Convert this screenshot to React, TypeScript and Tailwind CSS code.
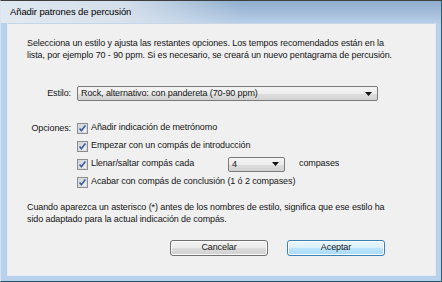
import React from 'react';

const font = "font-['Liberation_Sans',Arial,sans-serif]";

function CheckBox() {
  return (
    <svg width="11" height="11" viewBox="0 0 11 11" className="shrink-0">
      <defs>
        <linearGradient id="cbg" x1="0" y1="0" x2="1" y2="1">
          <stop offset="0" stopColor="#cbcfd5" />
          <stop offset="1" stopColor="#f6f7f8" />
        </linearGradient>
      </defs>
      <rect x="0.5" y="0.5" width="10" height="10" fill="#f4f4f4" stroke="#8e8f8f" />
      <rect x="1.5" y="1.5" width="8" height="8" fill="url(#cbg)" stroke="#d7dade" />
      <path d="M2.6 5.6 L4.4 7.8 L8.4 2.6" fill="none" stroke="#3a5b9e" strokeWidth="1.6" />
    </svg>
  );
}

function Arrow() {
  return (
    <svg width="7" height="4" viewBox="0 0 7 4">
      <path d="M0 0 H7 L3.5 4 Z" fill="#111" />
    </svg>
  );
}

function Combo({ text, className }: { text: string; className: string }) {
  return (
    <div
      className={`flex h-[15px] items-center justify-between rounded-[2px] border border-[#7a7a7a] bg-[linear-gradient(to_bottom,#f4f4f4_0%,#ececec_50%,#dedede_51%,#d2d2d2_100%)] pr-[5px] pl-[3px] ${className}`}
    >
      <span className="leading-none whitespace-nowrap">{text}</span>
      <Arrow />
    </div>
  );
}

function Option({ label, children }: { label: string; children?: React.ReactNode }) {
  return (
    <div className="flex h-[18px] items-center">
      <CheckBox />
      <span className="ml-[3px] w-[137px] whitespace-nowrap">{label}</span>
      {children}
    </div>
  );
}

function Button({ label, def }: { label: string; def?: boolean }) {
  return (
    <div
      className={`flex h-[16px] w-[98px] items-center justify-center rounded-[3px] border ${
        def
          ? 'border-[#3c7fb1] bg-[linear-gradient(to_bottom,#eaf6fd_0%,#d9f0fc_50%,#bee6fd_51%,#a7d9f5_100%)] shadow-[inset_0_0_0_1px_#ffffff]'
          : 'border-[#707070] bg-[linear-gradient(to_bottom,#f2f2f2_0%,#ebebeb_50%,#dddddd_51%,#cfcfcf_100%)] shadow-[inset_0_0_0_1px_#fcfcfc]'
      }`}
    >
      {label}
    </div>
  );
}

export default function App() {
  return (
    <div
      className={`box-border flex h-[282px] w-[442px] flex-col border-t border-r border-b border-l border-t-[#3e3e3e] border-r-[#2c5f6e] border-b-[#1f5566] border-l-[#d6e3f0] bg-[#b9d1ea] text-[9px] tracking-[-0.1px] text-[#151515] ${font}`}
    >
      <div className="flex h-[22px] items-center bg-[linear-gradient(to_right,rgba(228,234,241,0.95)_0%,rgba(222,230,239,0.85)_28%,rgba(200,216,233,0)_55%),linear-gradient(to_bottom,#8eadcd_0%,#a3bdd9_50%,#b7cee7_100%)] pl-[9px] text-[9.5px] text-black">
        Añadir patrones de percusión
      </div>

      <div className="ml-[6px] h-[253px] w-[429px] border border-[#e2ebf5] border-t-[#c6d6e7] bg-[#f0f0f0]">
        <div className="pt-[13px] pl-[19px] leading-[12px]">
          <div className="whitespace-nowrap">
            Selecciona un estilo y ajusta las restantes opciones. Los tempos recomendados están en la
          </div>
          <div className="whitespace-nowrap">
            lista, por ejemplo 70 - 90 ppm. Si es necesario, se creará un nuevo pentagrama de percusión.
          </div>
        </div>

        <div className="mt-[25px] flex items-center pl-[19px]">
          <span className="w-[44px] text-right">Estilo:</span>
          <Combo text="Rock, alternativo: con pandereta (70-90 ppm)" className="ml-[6px] w-[301px]" />
        </div>

        <div className="mt-[18px] flex pl-[17px]">
          <span className="mt-[3px] w-[46px] text-right leading-[12px]">Opciones:</span>
          <div className="ml-[6px] flex flex-col">
            <Option label="Añadir indicación de metrónomo" />
            <Option label="Empezar con un compás de introducción" />
            <Option label="Llenar/saltar compás cada">
              <Combo text="4" className="w-[57px]" />
              <span className="ml-[14px]">compases</span>
            </Option>
            <Option label="Acabar con compás de conclusión (1 ó 2 compases)" />
          </div>
        </div>

        <div className="mt-[10px] pl-[19px] leading-[12px]">
          <div className="whitespace-nowrap">
            Cuando aparezca un asterisco (*) antes de los nombres de estilo, significa que ese estilo ha
          </div>
          <div className="whitespace-nowrap">sido adaptado para la actual indicación de compás.</div>
        </div>

        <div className="mt-[15px] flex justify-end gap-[19px] pr-[50px]">
          <Button label="Cancelar" />
          <Button label="Aceptar" def />
        </div>
      </div>
    </div>
  );
}
